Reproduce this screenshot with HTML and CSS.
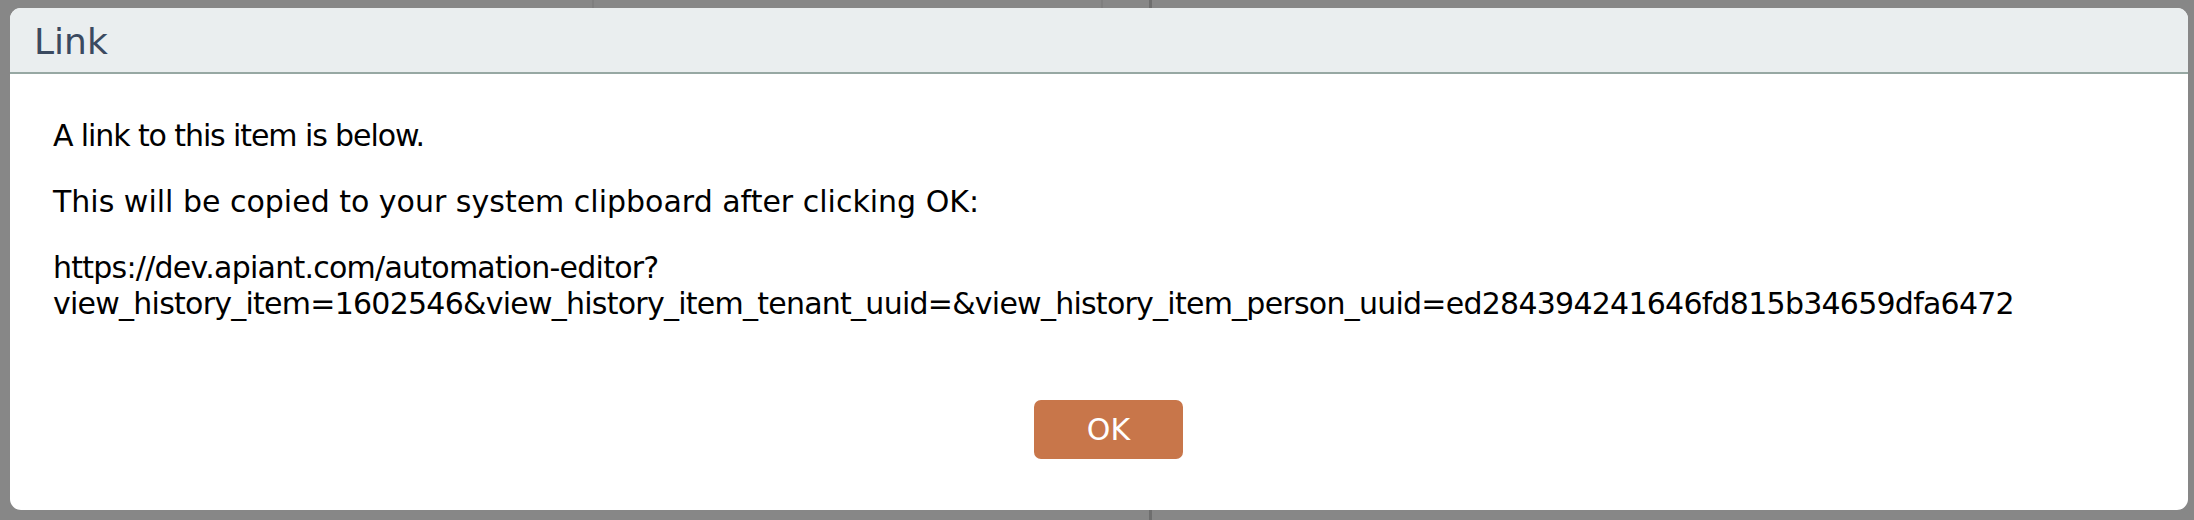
FILE: index.html
```html
<!DOCTYPE html>
<html>
<head>
<meta charset="utf-8">
<link rel="stylesheet" href="styles.css">
</head>
<body>
<div class="backdrop">
  <div class="dialog">
    <div class="dialog-header">
      <span class="dialog-title">Link</span>
    </div>
    <div class="dialog-body">
      <p class="msg msg-intro">A link to this item is below.</p>
      <p class="msg">This will be copied to your system clipboard after clicking OK:</p>
      <p class="msg url">https://dev.apiant.com/automation-editor?<br>view_history_item=1602546&amp;view_history_item_tenant_uuid=&amp;view_history_item_person_uuid=ed284394241646fd815b34659dfa6472</p>
    </div>
    <div class="dialog-actions">
      <button class="btn-ok">OK</button>
    </div>
  </div>
</div>
</body>
</html>
```

FILE: styles.css
```css
html, body {
  margin: 0;
  padding: 0;
}
body {
  width: 2194px;
  height: 520px;
  background-color: #878787;
  background-image:
    linear-gradient(to right, transparent 592px, #7f7f7f 592px, #7f7f7f 594px, transparent 594px),
    linear-gradient(to right, transparent 1101px, #7f7f7f 1101px, #7f7f7f 1103px, transparent 1103px),
    linear-gradient(to right, transparent 1149px, #6e6e6e 1149px, #6e6e6e 1152px, transparent 1152px);
  background-size: 100% 8px, 100% 8px, 100% 100%;
  background-repeat: no-repeat;
  font-family: "DejaVu Sans", Verdana, sans-serif;
  overflow: hidden;
}
.backdrop {
  padding: 8px 6px 10px 10px;
}
.dialog {
  width: 2178px;
  height: 502px;
  background: #ffffff;
  border-radius: 11px;
  overflow: hidden;
  display: flex;
  flex-direction: column;
}
.dialog-header {
  height: 64px;
  background: #eaeeef;
  border-bottom: 2px solid #97a8a3;
  display: flex;
  align-items: center;
  padding-left: 24px;
}
.dialog-title {
  font-size: 36px;
  color: #3b4a60;
  line-height: 1;
  padding-top: 4px;
}
.dialog-body {
  padding: 44px 43px 0 43px;
}
.msg {
  margin: 0 0 30px 0;
  font-size: 30px;
  line-height: 36px;
  color: #000;
}
.msg-intro {
  letter-spacing: -1.1px;
}
.url {
  margin-bottom: 0;
  letter-spacing: -0.75px;
}
.dialog-actions {
  display: flex;
  justify-content: center;
  padding-top: 78px;
  padding-left: 19px;
}
.btn-ok {
  width: 149px;
  height: 59px;
  border: none;
  border-radius: 7px;
  background: #c8764a;
  color: #ffffff;
  font-family: "DejaVu Sans", Verdana, sans-serif;
  font-size: 30px;
  padding: 0;
}
```
